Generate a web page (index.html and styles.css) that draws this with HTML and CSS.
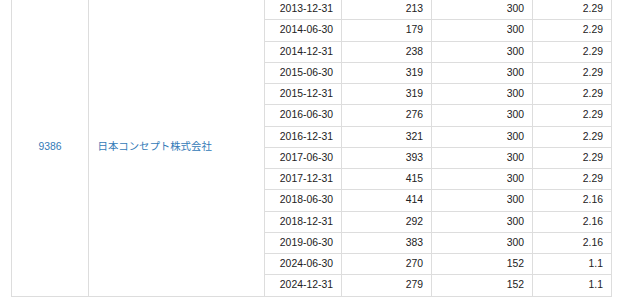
FILE: index.html
```html
<!DOCTYPE html>
<html lang="ja">
<head>
<meta charset="utf-8">
<link rel="stylesheet" href="styles.css">
</head>
<body>
<div class="wrap">
<table class="grid">
<colgroup>
<col class="c-code"><col class="c-name"><col class="c-date"><col class="c-a"><col class="c-b"><col class="c-c">
</colgroup>
<tbody>
<tr><td class="code" rowspan="14"><a href="#">9386</a></td><td class="name" rowspan="14"><a href="#">日本コンセプト株式会社</a></td><td class="num">2013-12-31</td><td class="num">213</td><td class="num">300</td><td class="num">2.29</td></tr>
<tr><td class="num">2014-06-30</td><td class="num">179</td><td class="num">300</td><td class="num">2.29</td></tr>
<tr><td class="num">2014-12-31</td><td class="num">238</td><td class="num">300</td><td class="num">2.29</td></tr>
<tr><td class="num">2015-06-30</td><td class="num">319</td><td class="num">300</td><td class="num">2.29</td></tr>
<tr><td class="num">2015-12-31</td><td class="num">319</td><td class="num">300</td><td class="num">2.29</td></tr>
<tr><td class="num">2016-06-30</td><td class="num">276</td><td class="num">300</td><td class="num">2.29</td></tr>
<tr><td class="num">2016-12-31</td><td class="num">321</td><td class="num">300</td><td class="num">2.29</td></tr>
<tr><td class="num">2017-06-30</td><td class="num">393</td><td class="num">300</td><td class="num">2.29</td></tr>
<tr><td class="num">2017-12-31</td><td class="num">415</td><td class="num">300</td><td class="num">2.29</td></tr>
<tr><td class="num">2018-06-30</td><td class="num">414</td><td class="num">300</td><td class="num">2.16</td></tr>
<tr><td class="num">2018-12-31</td><td class="num">292</td><td class="num">300</td><td class="num">2.16</td></tr>
<tr><td class="num">2019-06-30</td><td class="num">383</td><td class="num">300</td><td class="num">2.16</td></tr>
<tr><td class="num">2024-06-30</td><td class="num">270</td><td class="num">152</td><td class="num">1.1</td></tr>
<tr><td class="num">2024-12-31</td><td class="num">279</td><td class="num">152</td><td class="num">1.1</td></tr>
</tbody>
</table>
</div>
</body>
</html>
```
FILE: styles.css
```css
html, body {
  margin: 0;
  padding: 0;
  background: #fff;
  overflow: hidden;
}
.wrap {
  padding-left: 11px;
  margin-top: -2px;
}
.grid {
  border-collapse: collapse;
  table-layout: fixed;
  width: 600px;
  font-family: "Liberation Sans", Arial, "Noto Sans CJK JP", sans-serif;
  font-size: 10.4px;
  color: #222;
}
.c-code { width: 77px; }
.c-name { width: 176px; }
.c-date { width: 77px; }
.c-a { width: 90px; }
.c-b { width: 101px; }
.c-c { width: 79px; }
.grid td {
  border: 1px solid #dddddd;
  padding: 0 8px;
  height: 20.25px;
  line-height: 12px;
  vertical-align: middle;
}
.grid td.num {
  text-align: right;
}
.grid td.code {
  text-align: center;
}
.grid td.name {
  text-align: left;
  padding-left: 8.5px;
}
.grid a {
  color: #337ab7;
  text-decoration: none;
}
.name a {
  font-family: "Liberation Sans", "Noto Sans CJK JP", sans-serif;
}
```
